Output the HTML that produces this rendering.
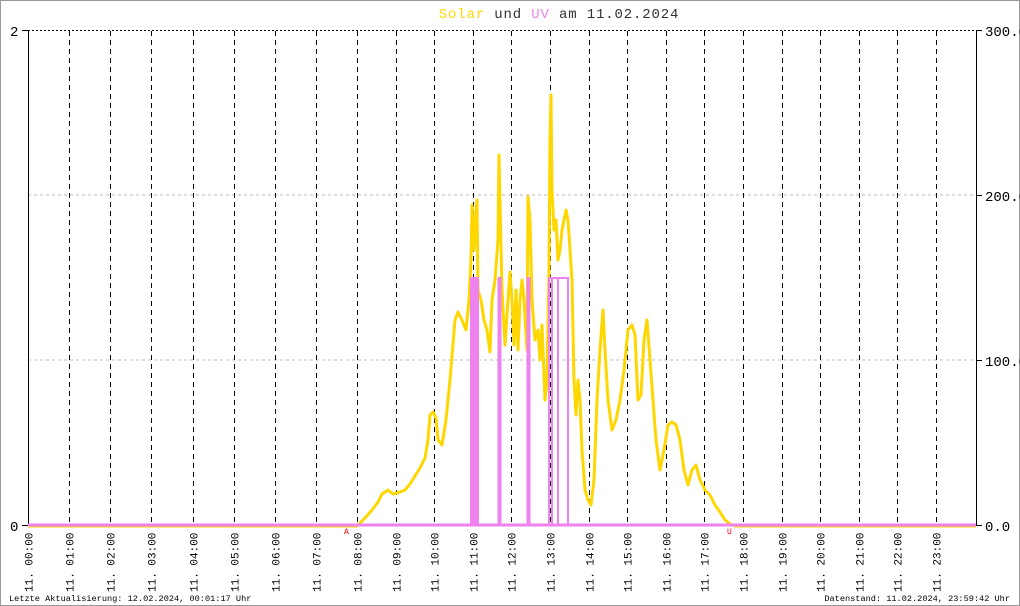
<!DOCTYPE html><html><head><style>body{margin:0}svg{display:block}</style></head><body>
<svg width="1020" height="606" xmlns="http://www.w3.org/2000/svg" font-family="Liberation Mono, monospace">
<rect x="0.5" y="0.5" width="1019" height="605" fill="#fff" stroke="#999"/>
<text x="559" y="18" font-size="14" letter-spacing="0.85" text-anchor="middle"><tspan fill="#ffd700">Solar</tspan><tspan fill="#333"> und </tspan><tspan fill="#ee82ee">UV</tspan><tspan fill="#333"> am 11.02.2024</tspan></text>
<line x1="28" y1="195" x2="976" y2="195" stroke="#bbb" stroke-dasharray="3,3"/>
<line x1="28" y1="360" x2="976" y2="360" stroke="#bbb" stroke-dasharray="3,3"/>
<line x1="28" y1="30.5" x2="976" y2="30.5" stroke="#000" stroke-dasharray="2,2"/>
<g stroke="#000" stroke-dasharray="5,4" id="g"></g>
<line x1="28.5" y1="30" x2="28.5" y2="525" stroke="#000"/>
<line x1="976.5" y1="30" x2="976.5" y2="525" stroke="#000"/>
<line x1="22" y1="30.5" x2="28" y2="30.5" stroke="#000"/><line x1="22" y1="525.5" x2="28" y2="525.5" stroke="#000"/>
<line x1="976" y1="30.5" x2="982" y2="30.5" stroke="#000"/><line x1="976" y1="195.5" x2="982" y2="195.5" stroke="#000"/><line x1="976" y1="360.5" x2="982" y2="360.5" stroke="#000"/><line x1="976" y1="525.5" x2="982" y2="525.5" stroke="#000"/>
<g font-size="14" fill="#000"><text x="10" y="36">2</text><text x="10" y="531">0</text><text x="985" y="36">300.0</text><text x="985" y="201">200.0</text><text x="985" y="366">100.0</text><text x="985" y="531">0.0</text></g>
<polyline fill="none" stroke="#ffd700" stroke-width="3" stroke-linejoin="round" points="28,526 357,526 365,518 372,510 378,502 382,494 388,490 393,494 400,492 405,490 410,484 415,476 420,468 425,458 428,440 430,415 433,412 436,418 438,440 442,445 446,420 450,380 455,320 458,312 462,320 466,330 469,300 471,260 472,205 474,250 476,210 477,200 478,290 481,300 484,320 487,330 490,352 492,300 495,280 498,240 499,155 500,200 502,290 505,345 508,300 510,272 512,300 514,345 516,290 518,350 520,300 522,280 524,300 527,350 528,197 530,220 532,300 535,340 538,330 540,360 542,325 545,400 547,380 549,270 550,140 551,95 552,190 554,230 556,220 558,260 560,250 562,230 564,220 566,210 568,220 570,250 572,280 574,380 576,415 578,380 580,400 582,450 585,490 588,500 591,505 594,480 597,400 600,350 603,310 605,350 608,400 612,430 616,420 620,400 624,370 628,330 632,325 635,335 638,400 641,395 644,340 647,320 650,360 653,400 656,440 660,470 664,450 668,425 672,422 676,425 680,440 684,470 688,485 692,470 696,465 700,480 705,490 710,495 715,505 720,512 725,520 730,524 735,526 976,526"/>
<g fill="none" stroke="#ee82ee" stroke-width="2">
<rect x="471" y="278" width="7" height="247" fill="#ee82ee"/>
<rect x="498.5" y="278" width="2" height="247" fill="#ee82ee"/>
<rect x="527.5" y="278" width="2" height="247"/>
<rect x="549" y="278" width="3" height="247"/>
<rect x="552" y="278" width="6" height="247"/>
<rect x="558" y="278" width="10" height="247"/>
</g>
<line x1="28" y1="525" x2="976" y2="525" stroke="#ee82ee" stroke-width="3"/>
<text x="344" y="534" font-size="8" fill="#e00">A</text><text x="727" y="534" font-size="8" fill="#e00">U</text>
<g id="lb" font-size="11" fill="#000"></g>
<text x="9" y="601" font-size="8.6" fill="#000">Letzte Aktualisierung: 12.02.2024, 00:01:17 Uhr</text>
<text x="1010" y="601" font-size="8.6" fill="#000" text-anchor="end">Datenstand: 11.02.2024, 23:59:42 Uhr</text>
<script>
var g=document.getElementById('g'),lb=document.getElementById('lb'),ns='http://www.w3.org/2000/svg';
for(var i=0;i<24;i++){var x=i<=8?28+i*41.125:357+(i-8)*38.6;x=Math.round(x)+0.5;
if(i>0){var l=document.createElementNS(ns,'line');l.setAttribute('x1',x);l.setAttribute('x2',x);l.setAttribute('y1',31);l.setAttribute('y2',525);g.appendChild(l);}
var t=document.createElementNS(ns,'text');var hh=(i<10?'0':'')+i;t.textContent='11. '+hh+':00';t.setAttribute('transform','translate('+(x+4)+',592) rotate(-90)');lb.appendChild(t);}
</script>
</svg></body></html>
